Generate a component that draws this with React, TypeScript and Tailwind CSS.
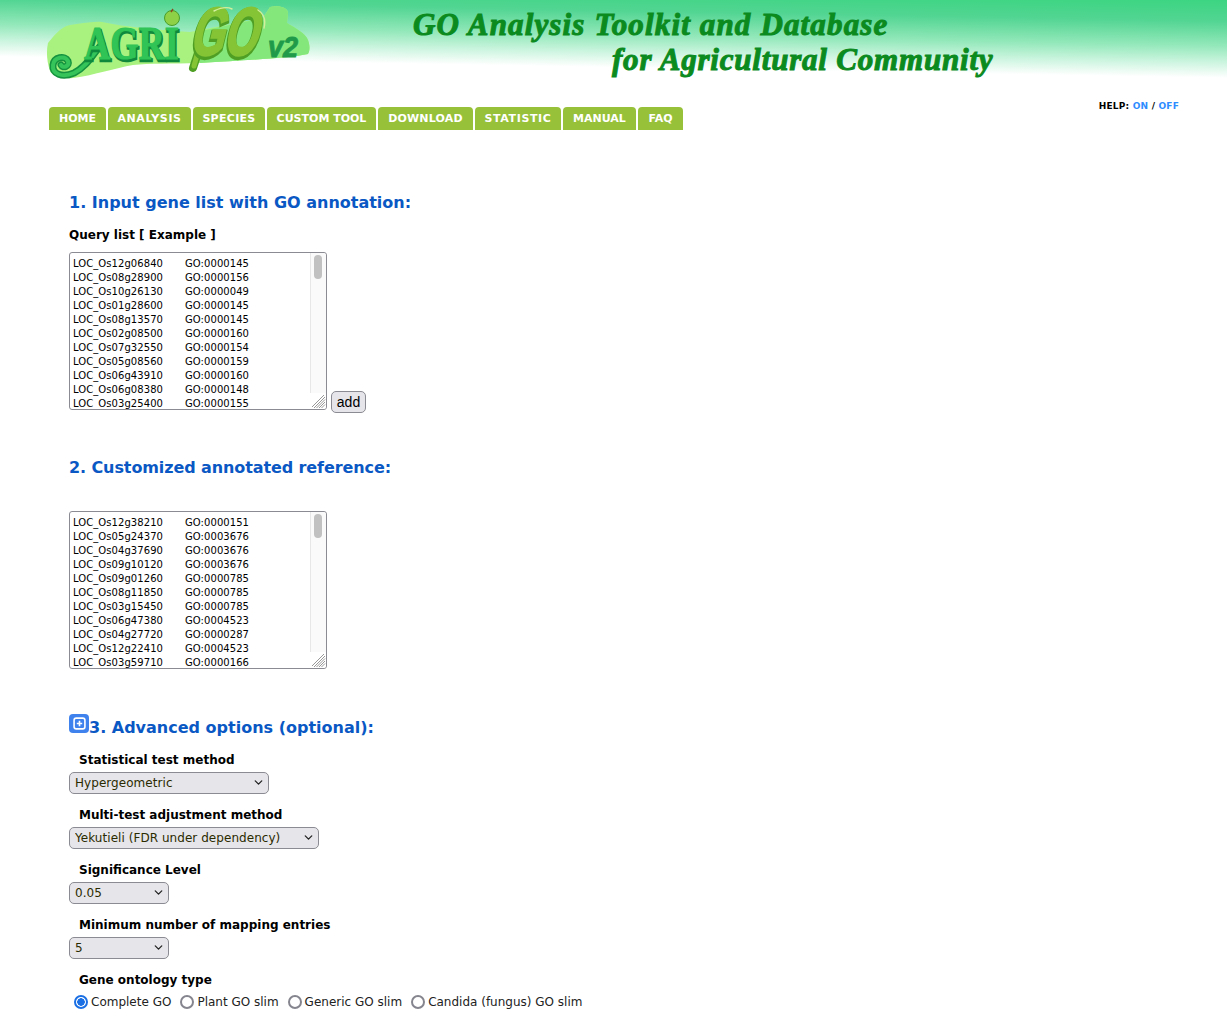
import type { ReactNode } from "react";
import { ChevronDown } from "lucide-react";

const NAV_ITEMS = [
  { label: "HOME", className: "w-[57px]" },
  { label: "ANALYSIS", className: "w-[83px] tracking-[0.6px]" },
  { label: "SPECIES", className: "w-[72px] tracking-[0.3px]" },
  { label: "CUSTOM TOOL", className: "w-[109px]" },
  { label: "DOWNLOAD", className: "w-[95px] tracking-[0.2px]" },
  { label: "STATISTIC", className: "w-[86px] tracking-[0.6px]" },
  { label: "MANUAL", className: "w-[73px]" },
  { label: "FAQ", className: "w-[45px]" },
];

const QUERY_LIST = [
  "LOC_Os12g06840\tGO:0000145",
  "LOC_Os08g28900\tGO:0000156",
  "LOC_Os10g26130\tGO:0000049",
  "LOC_Os01g28600\tGO:0000145",
  "LOC_Os08g13570\tGO:0000145",
  "LOC_Os02g08500\tGO:0000160",
  "LOC_Os07g32550\tGO:0000154",
  "LOC_Os05g08560\tGO:0000159",
  "LOC_Os06g43910\tGO:0000160",
  "LOC_Os06g08380\tGO:0000148",
  "LOC_Os03g25400\tGO:0000155",
].join("\n");

const REFERENCE_LIST = [
  "LOC_Os12g38210\tGO:0000151",
  "LOC_Os05g24370\tGO:0003676",
  "LOC_Os04g37690\tGO:0003676",
  "LOC_Os09g10120\tGO:0003676",
  "LOC_Os09g01260\tGO:0000785",
  "LOC_Os08g11850\tGO:0000785",
  "LOC_Os03g15450\tGO:0000785",
  "LOC_Os06g47380\tGO:0004523",
  "LOC_Os04g27720\tGO:0000287",
  "LOC_Os12g22410\tGO:0004523",
  "LOC_Os03g59710\tGO:0000166",
].join("\n");

const TAIL = "M102 44 C94 52 88 66 74 73 C62 78 52 74 53 65 C54 57 65 55 68 61 C70 66 63 69 61 65";

function Logo() {
  return (
    <svg
      className="absolute left-[40px] top-0 h-[85px] w-[275px]"
      viewBox="40 0 275 85"
    >
      <path
        d="M48 43 C54 36 60 27 70 25 C80 24 92 21 102 22 C125 27 160 30 190 32 L263 18 L270 7 C278 5 288 7 288 13 L287 23 C297 29 306 34 308 40 C310 46 310 50 308 54 C290 58 250 60 200 63 C170 64 150 63 133 65 C115 68 95 75 73 78 C62 79 52 76 50 71 C47 62 46 52 48 43 Z"
        fill="#a9f27f"
      />
      <path
        d="M200 63 L196 32 L263 18 L270 7 C278 5 288 7 288 13 L287 23 C297 29 306 34 308 40 C310 46 310 50 308 54 C290 58 250 60 200 63 Z"
        fill="#84e77c"
      />
      <path d={TAIL} fill="none" stroke="#15923f" strokeWidth="7" strokeLinecap="round" />
      <path d={TAIL} fill="none" stroke="#35c45a" strokeWidth="4" strokeLinecap="round" />
      <g fontFamily="'Liberation Serif', serif" fontWeight="700" fontSize="46">
        <text x="85" y="61" fill="#0f8a3c" stroke="#0f8a3c" strokeWidth="2.4" textLength="95" lengthAdjust="spacingAndGlyphs">
          AGRI
        </text>
        <text x="84" y="59" fill="#2fc455" stroke="#2fc455" strokeWidth="1" textLength="95" lengthAdjust="spacingAndGlyphs">
          AGRI
        </text>
      </g>
      <circle cx="172" cy="18" r="7.5" fill="#8ed046" stroke="#4a9e2b" strokeWidth="1" />
      <path d="M171 12 L173 9" stroke="#8a4a20" strokeWidth="1.4" />
      <path d="M199 50 L193 68" stroke="#4f9f25" strokeWidth="8" strokeLinecap="round" />
      <path d="M199 48 L194 66" stroke="#85c435" strokeWidth="5" strokeLinecap="round" />
      <g
        fontFamily="'Liberation Sans', sans-serif"
        fontWeight="700"
        fontSize="68"
        transform="translate(189 55) skewX(-14)"
      >
        <text x="0" y="2" fill="#4f9f25" stroke="#4f9f25" strokeWidth="5" textLength="67" lengthAdjust="spacingAndGlyphs">
          GO
        </text>
        <text x="0" y="0" fill="#85c435" stroke="#85c435" strokeWidth="2.2" textLength="67" lengthAdjust="spacingAndGlyphs">
          GO
        </text>
      </g>
      <path d="M214 11 C222 7 228 7 232 9 M258 10 C264 14 266 20 264 28" fill="none" stroke="#d3ee9c" strokeWidth="1.4" strokeLinecap="round" />
      <text
        x="268"
        y="57"
        fontFamily="'Liberation Sans', sans-serif"
        fontWeight="700"
        fontStyle="italic"
        fontSize="30"
        fill="#1f9a49"
        stroke="#1f9a49"
        strokeWidth="1"
        textLength="30"
        lengthAdjust="spacingAndGlyphs"
      >
        v2
      </text>
    </svg>
  );
}

function Banner() {
  return (
    <header className="relative h-[80px] bg-[linear-gradient(181deg,#3cd582_0%,#52d592_21%,#93e8ba_45%,#cdf5e0_62%,#ffffff_77%)]">
      <Logo />
      <p className="absolute left-[413px] top-[6px] font-['Liberation_Serif'] text-[31px] font-bold italic leading-[38px] tracking-[1.15px] text-[#0b8a1e] [-webkit-text-stroke:1px_#0b8a1e]">
        GO Analysis Toolkit and Database
      </p>
      <p className="absolute left-[612px] top-[41px] font-['Liberation_Serif'] text-[31px] font-bold italic leading-[38px] tracking-[0.8px] text-[#0b8a1e] [-webkit-text-stroke:1px_#0b8a1e]">
        for Agricultural Community
      </p>
    </header>
  );
}

function Nav() {
  return (
    <div className="flex items-start justify-between pl-[49px] pr-[48px] pt-[20px]">
      <nav className="mt-[7px] flex gap-[2px]">
        {NAV_ITEMS.map((item) => (
          <a
            key={item.label}
            href="#"
            className={`${item.className} flex h-[23px] items-center justify-center rounded-t-[4px] bg-[#97c139] pt-[2px] text-[11px] font-bold text-white`}
          >
            {item.label}
          </a>
        ))}
      </nav>
      <p className="pt-px text-[9px] font-bold leading-[11px] tracking-[0.2px] text-black">
        HELP: <a href="#" className="text-[#2f8cff]">ON</a> / <a href="#" className="text-[#2f8cff]">OFF</a>
      </p>
    </div>
  );
}

function GeneBox({ value }: { value: string }) {
  return (
    <div className="relative h-[158px] w-[258px]">
      <textarea
        readOnly
        value={value}
        spellCheck={false}
        className="block h-full w-full resize-none overflow-hidden rounded-[3px] border border-[#8b8b93] bg-white pl-[3px] pt-[4px] text-[10px] leading-[14px] tracking-[0.07px] text-black outline-none [tab-size:112px]"
      />
      <div className="absolute bottom-px right-px top-px w-[16px] rounded-r-[3px] border-l border-[#e7e7e7] bg-[#fafafa]">
        <div className="ml-[3px] mt-[2px] h-[24px] w-[8px] rounded-full bg-[#c1c1c1]" />
      </div>
      <svg className="absolute bottom-px right-px h-[16px] w-[16px] rounded-br-[3px] bg-white" viewBox="0 0 16 16">
        <path d="M14 2 L2 14 M15 4 L4 15 M15 6.5 L6.5 15 M15 9 L9 15 M15 11.5 L11.5 15" stroke="#8c8c8c" strokeWidth="0.9" />
      </svg>
    </div>
  );
}

function Heading({ children, className = "" }: { children: ReactNode; className?: string }) {
  return (
    <h2 className={`${className} text-[16px] font-bold leading-[20px] text-[#0a58c4]`}>{children}</h2>
  );
}

function SelectField({ label, value, width, options }: { label: string; value: string; width: string; options: string[] }) {
  return (
    <div>
      <p className="pl-[10px] text-[12px] font-bold leading-[16px] text-black">{label}</p>
      <div className={`${width} relative mt-[4px]`}>
        <select
          defaultValue={value}
          className="block h-[22px] w-full appearance-none rounded-[5px] border border-[#8b8b93] bg-[#e6e5ea] pl-[5px] text-[12px] leading-[20px] tracking-[0.05px] text-[#2b2b00] outline-none"
        >
          {options.map((o) => (
            <option key={o}>{o}</option>
          ))}
        </select>
        <ChevronDown
          className="pointer-events-none absolute right-[4px] top-[4px] h-[13px] w-[13px] text-[#222]"
          strokeWidth={2.4}
        />
      </div>
    </div>
  );
}

function Radio({ label, checked }: { label: string; checked?: boolean }) {
  return (
    <label className="flex items-center gap-[3px] text-[12px] leading-[16px] text-[#222]">
      <input
        type="radio"
        name="go-type"
        defaultChecked={checked}
        className="h-[14px] w-[14px] appearance-none rounded-full border-2 border-[#85858f] bg-white checked:border-[#1b6fe4] checked:bg-[radial-gradient(circle,#1b6fe4_0,#1b6fe4_3.5px,#ffffff_4px)]"
      />
      {label}
    </label>
  );
}

export default function App() {
  return (
    <div className="h-[1011px] overflow-hidden bg-white font-['DejaVu_Sans','Liberation_Sans',sans-serif]">
      <Banner />
      <Nav />
      <main className="pl-[69px]">
        <section className="pt-[63px]">
          <Heading>1. Input gene list with GO annotation:</Heading>
          <p className="mt-[14px] text-[12px] font-bold leading-[16px] text-black">Query list [ Example ]</p>
          <div className="mt-[9px] flex items-start gap-[4px]">
            <GeneBox value={QUERY_LIST} />
            <button className="mt-[139px] h-[22px] w-[35px] rounded-[5px] border border-[#8b8b93] bg-[#e6e5ea] font-['Liberation_Sans'] text-[14px] leading-[18px] text-black">
              add
            </button>
          </div>
        </section>
        <section className="pt-[45px]">
          <Heading className="tracking-[-0.1px]">2. Customized annotated reference:</Heading>
          <div className="mt-[33px]">
            <GeneBox value={REFERENCE_LIST} />
          </div>
        </section>
        <section className="pt-[45px]">
          <div className="flex items-end">
            <span className="mb-[5px] flex h-[19px] w-[20px] items-center justify-center rounded-[4px] bg-[#3f82ee]">
              <svg viewBox="0 0 12 12" className="h-[13px] w-[13px]">
                <rect x="1" y="1" width="10" height="10" rx="2" fill="none" stroke="#fff" strokeWidth="1.5" />
                <path d="M6 3.5 V8.5 M3.5 6 H8.5" stroke="#fff" strokeWidth="1.5" />
              </svg>
            </span>
            <Heading>3. Advanced options (optional):</Heading>
          </div>
          <div className="mt-[14px] flex flex-col gap-[13px]">
            <SelectField label="Statistical test method" value="Hypergeometric" width="w-[200px]" options={["Hypergeometric", "Fisher", "Chi-square"]} />
            <SelectField label="Multi-test adjustment method" value="Yekutieli (FDR under dependency)" width="w-[250px]" options={["Yekutieli (FDR under dependency)", "Hochberg (FDR)", "Bonferroni"]} />
            <SelectField label="Significance Level" value="0.05" width="w-[100px]" options={["0.05", "0.01", "0.001"]} />
            <SelectField label="Minimum number of mapping entries" value="5" width="w-[100px]" options={["5", "10", "20"]} />
            <div>
              <p className="pl-[10px] text-[12px] font-bold leading-[16px] text-black">Gene ontology type</p>
              <div className="mt-[6px] flex gap-[9px] pl-[5px]">
                <Radio label="Complete GO" checked />
                <Radio label="Plant GO slim" />
                <Radio label="Generic GO slim" />
                <Radio label="Candida (fungus) GO slim" />
              </div>
            </div>
          </div>
        </section>
      </main>
    </div>
  );
}
